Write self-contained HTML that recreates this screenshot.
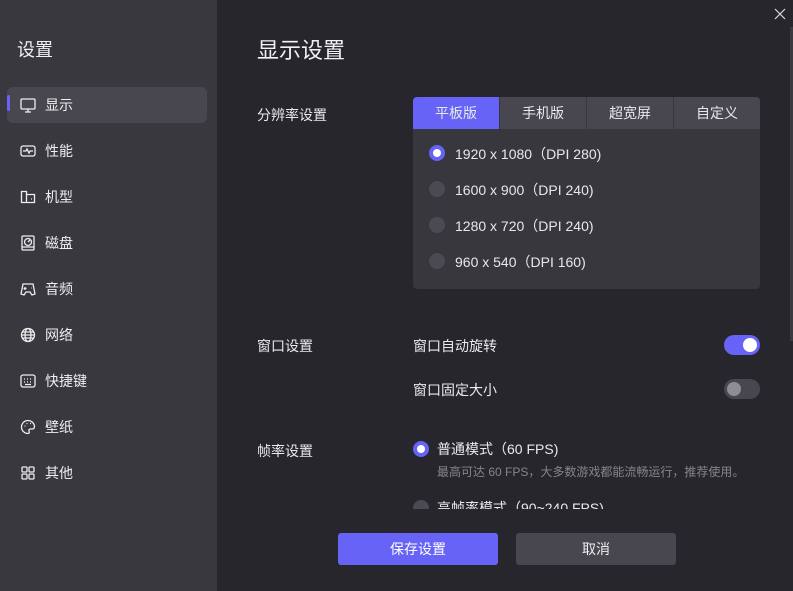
<!DOCTYPE html>
<html><head><meta charset="utf-8"><style>
*{margin:0;padding:0;box-sizing:border-box}
body{width:793px;height:591px;background:#27262d;font-family:"Liberation Sans","Noto Sans CJK SC",sans-serif;color:#e8e8ec;position:relative;overflow:hidden;font-size:14px}
.side{position:absolute;left:0;top:0;width:217px;height:591px;background:#38383e}
.side h1{position:absolute;left:17px;top:36px;font-size:18px;font-weight:normal;color:#f0f0f0}
.item{position:absolute;left:7px;width:200px;height:36px;display:flex;align-items:center;font-size:14px;color:#eee}
.item svg{position:absolute;left:13px;top:10px}
.item span{position:absolute;left:38px}
.item.act{background:#48474f;border-radius:6px}
.item.act:before{content:"";position:absolute;left:0;top:8px;width:3px;height:16px;background:#6663f6;border-radius:2px}
.abs{position:absolute}
.title{left:257px;top:33px;font-size:22px;color:#f2f2f2}
.lbl{font-size:14px;color:#eaeaea}
.tabs{left:413px;top:97px;width:347px;height:192px;background:#38373e;border-radius:4px;overflow:hidden}
.tab{position:absolute;top:0;height:32px;width:86px;background:#48474f;text-align:center;line-height:32px;font-size:14px}
.radio{position:absolute;width:16px;height:16px;border-radius:50%;background:#4b4a52}
.radio.on{background:#6663f6}
.radio.on:after{content:"";position:absolute;left:4px;top:4px;width:8px;height:8px;border-radius:50%;background:#fff}
.tog{position:absolute;width:36px;height:20px;border-radius:10px}
.tog i{position:absolute;top:3px;width:14px;height:14px;border-radius:50%}
.btn{position:absolute;top:533px;width:160px;height:32px;border-radius:3px;text-align:center;line-height:32px;font-size:14px}
</style></head><body>
<div class="side">
<h1>设置</h1>
<div class="item act" style="top:87px"><svg width="16" height="16" viewBox="0 0 16 16" fill="none" stroke="#eee" stroke-width="1.3"><rect x="1" y="2" width="14" height="10" rx="1"/><path d="M5 15h6M8 12v3"/></svg><span>显示</span></div>
<div class="item" style="top:133px"><svg width="16" height="16" viewBox="0 0 16 16" fill="none" stroke="#eee" stroke-width="1.3"><rect x="1" y="3" width="14" height="10" rx="2"/><path d="M3 8h3l1-2 2 4 1-2h3"/></svg><span>性能</span></div>
<div class="item" style="top:179px"><svg width="16" height="16" viewBox="0 0 16 16" fill="none" stroke="#eee" stroke-width="1.3"><path d="M1.5 2.5h5v3h8v8h-13z"/><path d="M6.5 5.5v8M11 10h1"/></svg><span>机型</span></div>
<div class="item" style="top:225px"><svg width="16" height="16" viewBox="0 0 16 16" fill="none" stroke="#eee" stroke-width="1.3"><rect x="2" y="1" width="12" height="14" rx="1"/><circle cx="8" cy="7" r="3.5"/><path d="M8 7l2-2M2 12h12"/></svg><span>磁盘</span></div>
<div class="item" style="top:271px"><svg width="16" height="16" viewBox="0 0 16 16" fill="none" stroke="#eee" stroke-width="1.3"><path d="M3 3h10l2 10-3 1-2-3H6l-2 3-3-1z"/><path d="M5 6v3M3.5 7.5h3M11 7h.5"/></svg><span>音频</span></div>
<div class="item" style="top:317px"><svg width="16" height="16" viewBox="0 0 16 16" fill="none" stroke="#eee" stroke-width="1.3"><circle cx="8" cy="8" r="6.5"/><ellipse cx="8" cy="8" rx="3" ry="6.5"/><path d="M1.5 8h13M2.5 5h11M2.5 11h11"/></svg><span>网络</span></div>
<div class="item" style="top:363px"><svg width="16" height="16" viewBox="0 0 16 16" fill="none" stroke="#eee" stroke-width="1.3"><rect x="1" y="2" width="14" height="12" rx="2"/><path d="M4 6h1M7 6h1M10 6h1M4 9h1M7 9h1M10 9h1M5 11.5h6"/></svg><span>快捷键</span></div>
<div class="item" style="top:409px"><svg width="16" height="16" viewBox="0 0 16 16" fill="none" stroke="#eee" stroke-width="1.3"><path d="M8 1.5a6.5 6.5 0 1 0 0 13c1.5 0 1.5-1.5 1-2.5s0-2 1.5-2h2a2.5 2.5 0 0 0 2-2.5A6.5 6.5 0 0 0 8 1.5z"/><path d="M4.5 7h1M6.5 4.5h1M10 4.5h1"/></svg><span>壁纸</span></div>
<div class="item" style="top:455px"><svg width="16" height="16" viewBox="0 0 16 16" fill="none" stroke="#eee" stroke-width="1.3"><rect x="2" y="2" width="5" height="5" rx="1"/><rect x="9" y="2" width="5" height="5" rx="1"/><rect x="2" y="9" width="5" height="5" rx="1"/><rect x="9" y="9" width="5" height="5" rx="1"/></svg><span>其他</span></div>
</div>
<svg class="abs" style="left:774px;top:8px" width="12" height="12" viewBox="0 0 12 12" stroke="#ddd" stroke-width="1.2"><path d="M1 1l10 10M11 1L1 11"/></svg>
<div class="abs" style="left:790px;top:27px;width:3px;height:314px;background:#3a3a40"></div>
<div class="abs title">显示设置</div>
<div class="abs lbl" style="left:257px;top:105px">分辨率设置</div>
<div class="abs tabs">
<div class="tab" style="left:0;background:#6663f6">平板版</div>
<div class="tab" style="left:87px">手机版</div>
<div class="tab" style="left:174px">超宽屏</div>
<div class="tab" style="left:261px">自定义</div>
<div class="radio on" style="left:16px;top:48px"></div><div class="abs" style="left:42px;top:47px">1920 x 1080（DPI 280)</div>
<div class="radio" style="left:16px;top:84px"></div><div class="abs" style="left:42px;top:83px">1600 x 900（DPI 240)</div>
<div class="radio" style="left:16px;top:120px"></div><div class="abs" style="left:42px;top:119px">1280 x 720（DPI 240)</div>
<div class="radio" style="left:16px;top:156px"></div><div class="abs" style="left:42px;top:155px">960 x 540（DPI 160)</div>
</div>
<div class="abs lbl" style="left:257px;top:336px">窗口设置</div>
<div class="abs lbl" style="left:413px;top:336px">窗口自动旋转</div>
<div class="tog" style="left:724px;top:335px;background:#6663f6"><i style="left:19px;background:#fff"></i></div>
<div class="abs lbl" style="left:413px;top:380px">窗口固定大小</div>
<div class="tog" style="left:724px;top:379px;background:#48474f"><i style="left:3px;background:#8e8d94"></i></div>
<div class="abs lbl" style="left:257px;top:441px">帧率设置</div>
<div class="radio on" style="left:413px;top:441px"></div>
<div class="abs lbl" style="left:437px;top:439px">普通模式（60 FPS)</div>
<div class="abs" style="left:437px;top:463px;font-size:12px;color:#86858c">最高可达 60 FPS，大多数游戏都能流畅运行，推荐使用。</div>
<div class="abs" style="left:400px;top:495px;width:380px;height:14px;overflow:hidden">
<div class="radio" style="left:13px;top:5px"></div>
<div class="abs lbl" style="left:37px;top:3px">高帧率模式（90~240 FPS)</div></div>
<div class="btn" style="left:338px;background:#6663f6;color:#fff">保存设置</div>
<div class="btn" style="left:516px;background:#48474f;color:#eee">取消</div>
</body></html>
